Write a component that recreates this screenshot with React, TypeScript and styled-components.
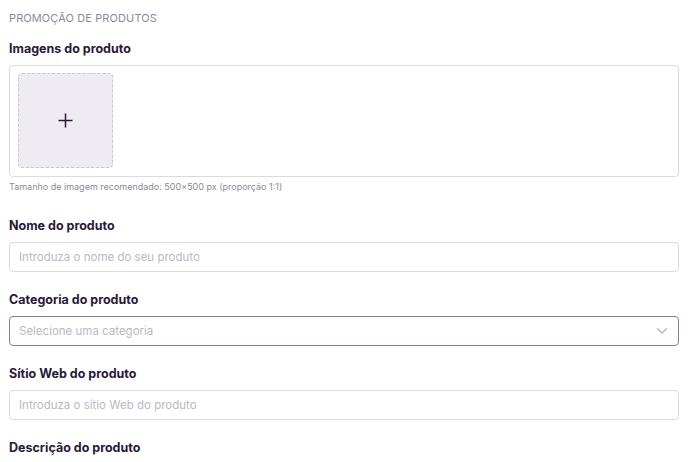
import React from "react";
import styled, {createGlobalStyle} from "styled-components";

const GlobalStyle = createGlobalStyle`
  body {
    margin: 0;
    background: #ffffff;
    font-family: Inter, "Noto Sans", sans-serif;
  }
`

const Page = styled.div`
  padding: 11px 9px 0 9px;
  display: flex;
  flex-direction: column;
`

const SectionTitle = styled.div`
  font-size: 11px;
  line-height: 14px;
  color: #8e889b;
  letter-spacing: 0.1px;
  margin-bottom: 15px;
`

const Field = styled.div`
  display: flex;
  flex-direction: column;
  margin-bottom: 19px;
`

const Label = styled.div`
  font-size: 12.5px;
  line-height: 16px;
  font-weight: 700;
  color: #2a1838;
  margin-bottom: 8px;
  margin-top: 1px;
`

const UploadBox = styled.div`
  height: 112px;
  box-sizing: border-box;
  border: 1px solid #dcd9e2;
  border-radius: 4px;
  padding: 7px 8px;
  display: flex;
  gap: 8px;
`

const AddTile = styled.button`
  width: 95px;
  height: 95px;
  box-sizing: border-box;
  background: #eeecf2;
  border: 1px dashed #c8c4d0;
  border-radius: 4px;
  display: flex;
  align-items: center;
  justify-content: center;
  padding: 0;
  cursor: pointer;
`

const Hint = styled.div`
  font-size: 9px;
  line-height: 11px;
  color: #8e889b;
  margin-top: 4px;
  margin-bottom: 6px;
`

const InputBox = styled.div<{$active?: boolean}>`
  height: 30px;
  box-sizing: border-box;
  border: 1px solid ${p => p.$active ? "#857ba0" : "#dcd9e2"};
  border-radius: 4px;
  display: flex;
  align-items: center;
  justify-content: space-between;
  padding: 0 10px 0 9px;
  font-size: 11.5px;
  color: #bcb7c7;
`

function Chevron() {
    return (
        <svg width="12" height="8" viewBox="0 0 12 8" fill="none">
            <path d="M1.5 1.8 L6 6 L10.5 1.8" stroke="#b9b5c1" strokeWidth="1.4" strokeLinecap="round" strokeLinejoin="round"/>
        </svg>
    );
}

function Plus() {
    return (
        <svg width="15" height="15" viewBox="0 0 15 15">
            <path d="M7.5 0.5 V14.5 M0.5 7.5 H14.5" stroke="#2a1838" strokeWidth="1.5"/>
        </svg>
    );
}

export default function App() {
    return (
        <Page>
            <GlobalStyle/>
            <SectionTitle>PROMOÇÃO DE PRODUTOS</SectionTitle>
            <Field>
                <Label>Imagens do produto</Label>
                <UploadBox>
                    <AddTile><Plus/></AddTile>
                </UploadBox>
                <Hint>Tamanho de imagem recomendado: 500×500 px (proporção 1:1)</Hint>
            </Field>
            <Field>
                <Label>Nome do produto</Label>
                <InputBox>Introduza o nome do seu produto</InputBox>
            </Field>
            <Field>
                <Label>Categoria do produto</Label>
                <InputBox $active>
                    Selecione uma categoria
                    <Chevron/>
                </InputBox>
            </Field>
            <Field>
                <Label>Sítio Web do produto</Label>
                <InputBox>Introduza o sítio Web do produto</InputBox>
            </Field>
            <Field>
                <Label>Descrição do produto</Label>
            </Field>
        </Page>
    );
}
